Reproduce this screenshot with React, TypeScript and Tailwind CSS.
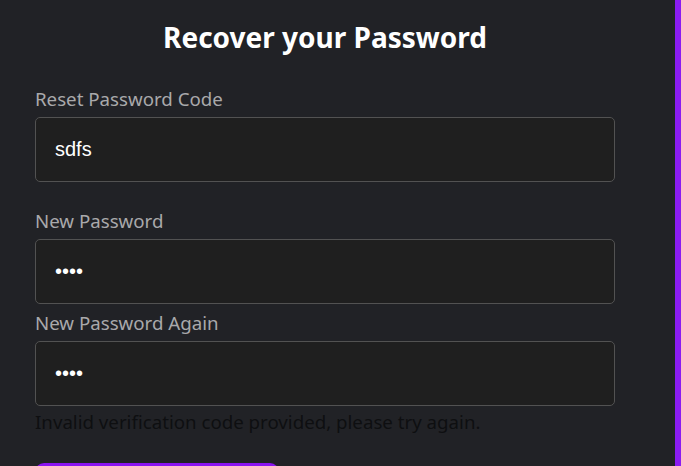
import { useState } from "react";

function Field({
  label,
  type,
  value,
  onChange,
  className,
}: {
  label: string;
  type: string;
  value: string;
  onChange: (v: string) => void;
  className?: string;
}) {
  return (
    <div className={className}>
      <label className="block text-[18.7px] leading-[27px] text-[#a9a9ab] mb-[5px]">{label}</label>
      <input
        type={type}
        value={value}
        onChange={(e) => onChange(e.target.value)}
        className="block w-full h-[65px] rounded-[5px] border border-[#525252] bg-[#1f1f1f] px-[19px] text-[20px] text-white outline-none font-['Liberation_Sans',Arial,sans-serif]"
      />
    </div>
  );
}

export default function App() {
  const [code, setCode] = useState("sdfs");
  const [pass, setPass] = useState("asdf");
  const [again, setAgain] = useState("asdf");

  return (
    <div className="flex h-[466px] bg-[#212226] font-['Noto_Sans',sans-serif] overflow-hidden">
      <div className="flex-1">
        <div className="w-[580px] ml-[35px] pt-[20px]">
          <h1 className="text-center text-[28px] leading-[34px] font-bold text-white">Recover your Password</h1>
          <form onSubmit={(e) => e.preventDefault()}>
            <Field label="Reset Password Code" type="text" value={code} onChange={setCode} className="mt-[31px]" />
            <Field label="New Password" type="password" value={pass} onChange={setPass} className="mt-[25px]" />
            <Field label="New Password Again" type="password" value={again} onChange={setAgain} className="mt-[5px]" />
            <p className="mt-[2px] text-[18.7px] leading-[27px] text-[#0e0f11]">
              Invalid verification code provided, please try again.
            </p>
            <button
              type="submit"
              className="mt-[28px] w-[244px] h-[60px] rounded-[9px] bg-[#8a14f0] text-white text-[18px]"
            >
              Reset Password
            </button>
          </form>
        </div>
      </div>
      <div className="w-[6px] shrink-0 bg-[#8a1cf1]" />
    </div>
  );
}
